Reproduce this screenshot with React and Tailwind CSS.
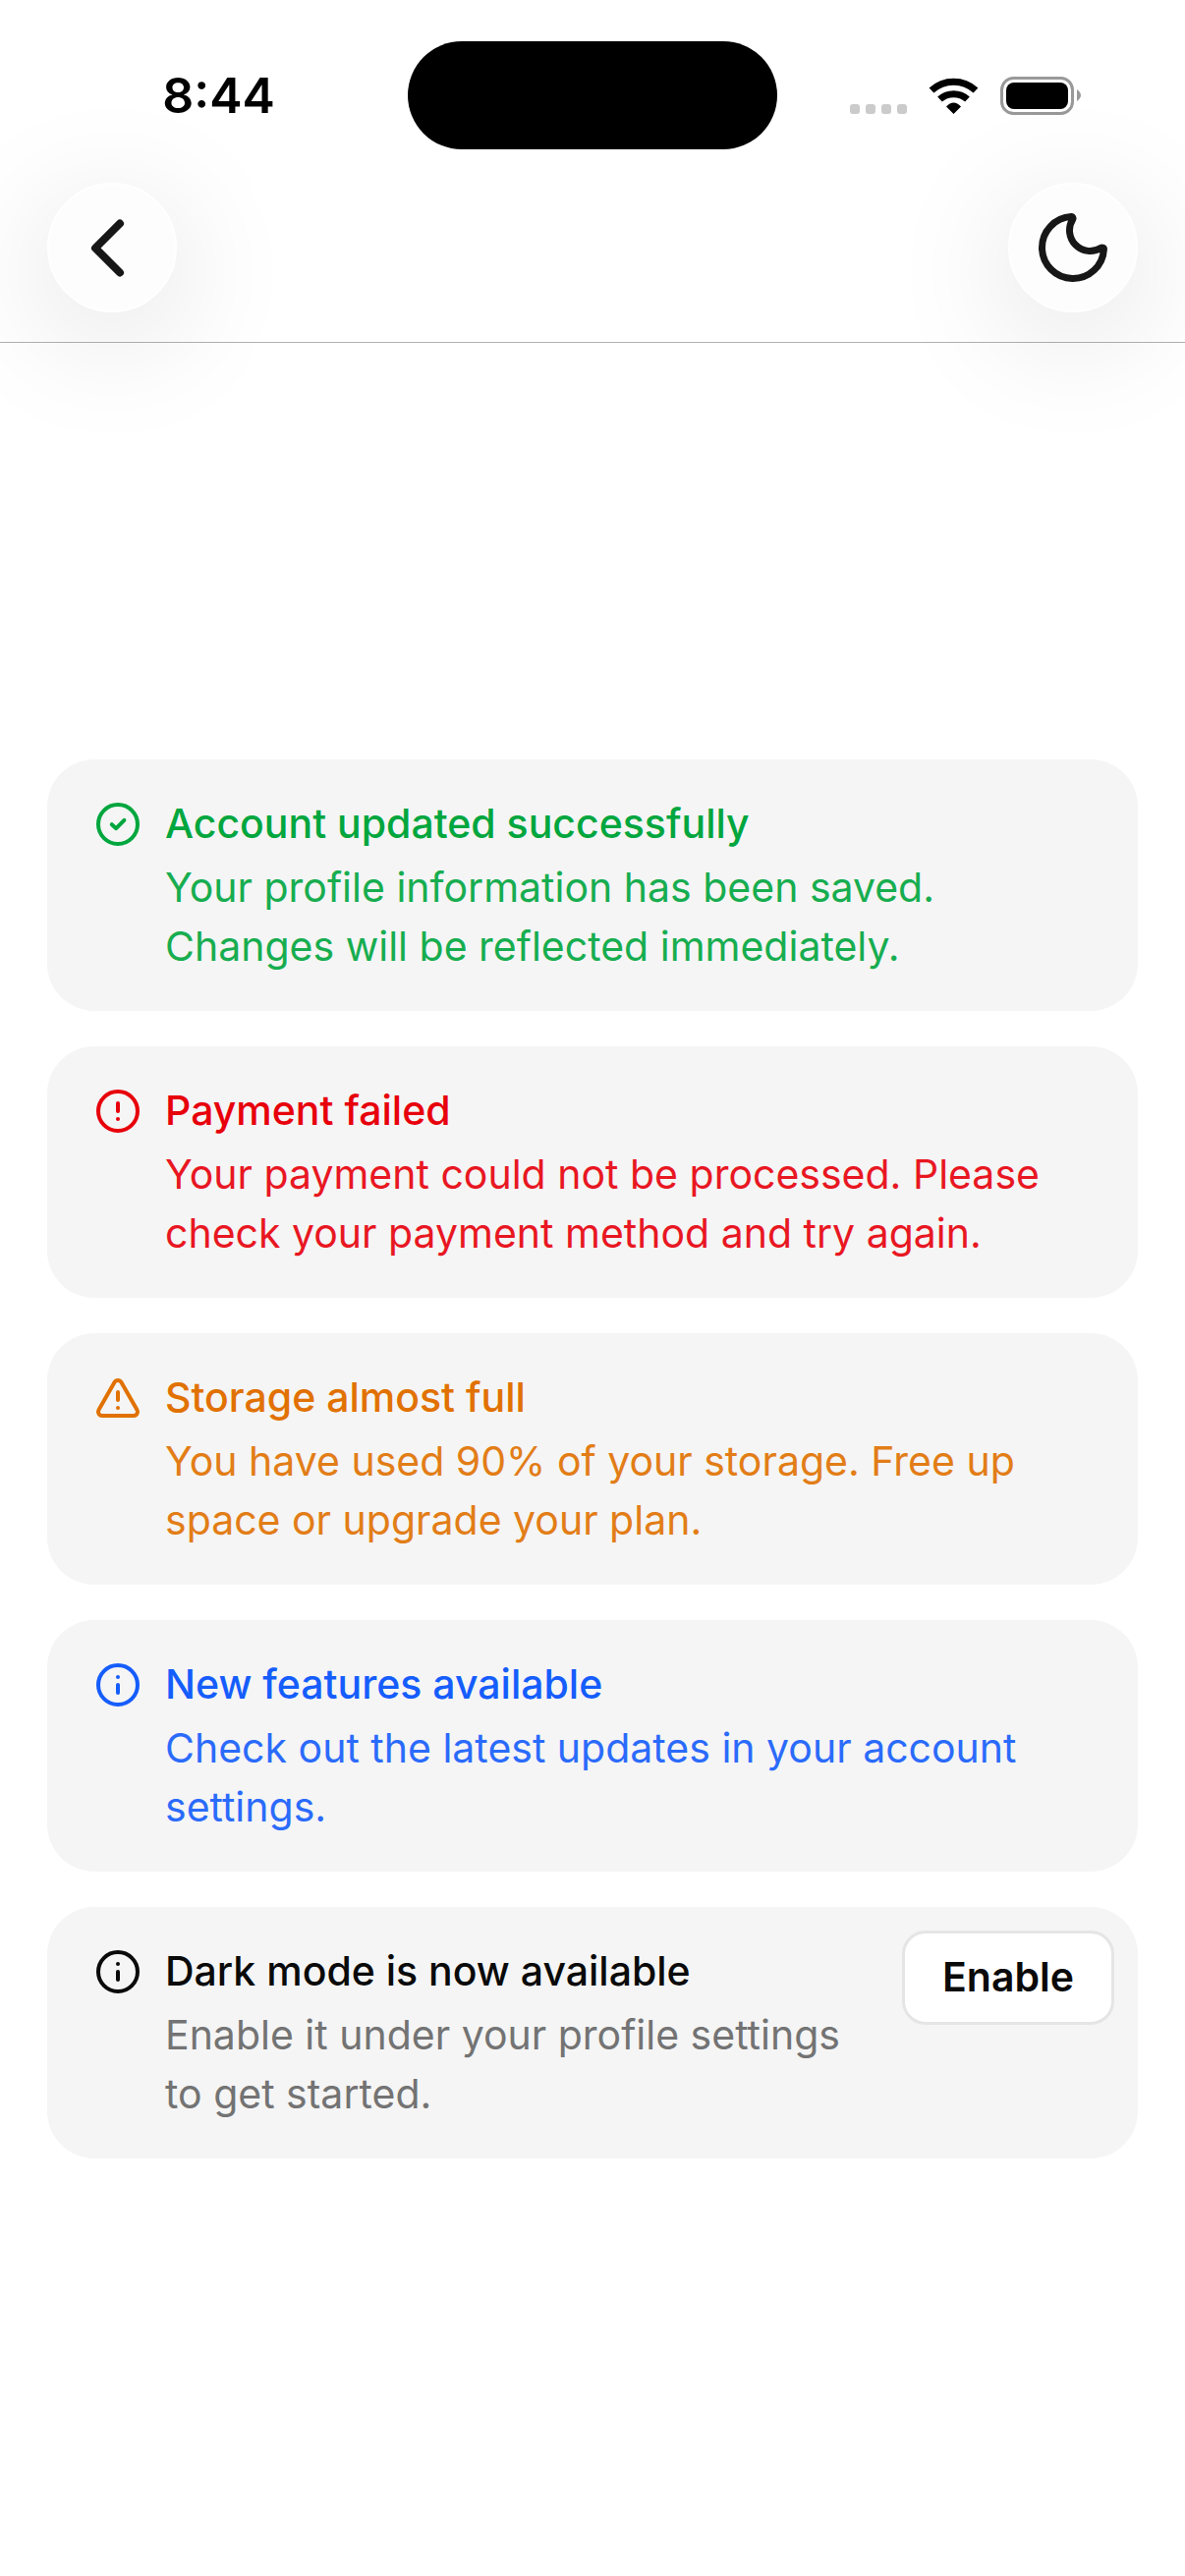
import { CircleAlert, Info, TriangleAlert } from 'lucide-react';

function CircleTick(props) {
  return (
    <svg
      viewBox="0 0 24 24"
      fill="none"
      stroke="currentColor"
      strokeWidth="2"
      strokeLinecap="round"
      strokeLinejoin="round"
      {...props}
    >
      <circle cx="12" cy="12" r="10" />
      <path d="m8.9 12.1 2.2 2 4.1-4.2" />
    </svg>
  );
}

const ALERTS = [
  {
    icon: CircleTick,
    title: 'Account updated successfully',
    text: 'Your profile information has been saved. Changes will be reflected immediately.',
    tone: 'text-[#00a63e]',
    textTone: 'opacity-90',
  },
  {
    icon: CircleAlert,
    title: 'Payment failed',
    text: 'Your payment could not be processed. Please check your payment method and try again.',
    tone: 'text-[#e7000b]',
    textTone: 'opacity-90',
  },
  {
    icon: TriangleAlert,
    title: 'Storage almost full',
    text: 'You have used 90% of your storage. Free up space or upgrade your plan.',
    tone: 'text-[#e17100]',
    textTone: 'opacity-90',
  },
  {
    icon: Info,
    title: 'New features available',
    text: 'Check out the latest updates in your account settings.',
    tone: 'text-[#155dfc]',
    textTone: 'opacity-90',
  },
  {
    icon: Info,
    title: 'Dark mode is now available',
    text: 'Enable it under your profile settings to get started.',
    tone: 'text-neutral-950',
    textTone: 'text-[#737373]',
    action: 'Enable',
  },
];

function StatusBar() {
  return (
    <div className="grid grid-cols-[1fr_376px_1fr] items-center pt-[42px]">
      <div className="pl-[30px] text-center text-[50px] leading-[60px] font-semibold text-black">8:44</div>
      <div className="h-[110px] rounded-full bg-black" />
      <div className="flex items-center justify-end pr-[106px]">
        <svg className="h-[40px] w-[236px]" viewBox="864 77 236 40" aria-hidden="true">
          {/* No signal */}
          <g fill="#cbcbcb">
            <rect x="865" y="106" width="10" height="10" rx="3" />
            <rect x="881" y="106" width="10" height="10" rx="3" />
            <rect x="897" y="106" width="10" height="10" rx="3" />
            <rect x="913" y="106" width="10" height="10" rx="3" />
          </g>
          {/* Wi-Fi */}
          <g fill="none" stroke="#000" strokeWidth="7">
            <path d="M948 92a33 33 0 0 1 45 0" />
            <path d="M956.500 101a21 21 0 0 1 28 0" />
          </g>
          <path d="M963 108.500q7.500-8 15 0l-7.500 7.500z" />
          {/* Battery */}
          <rect x="1019.500" y="79.500" width="72" height="36" rx="12" fill="none" stroke="#999" strokeWidth="3" />
          <rect x="1024" y="84" width="63" height="27" rx="8" />
          <path d="M1096 91q8 6 0 12z" fill="#999" />
        </svg>
      </div>
    </div>
  );
}

function RoundButton({ label, children }) {
  return (
    <button
      type="button"
      aria-label={label}
      className="flex size-[132px] items-center justify-center rounded-full border-2 border-white bg-[#fdfdfd] text-neutral-900 shadow-[0_24px_128px_rgba(0,0,0,0.13)]"
    >
      {children}
    </button>
  );
}

function Alert({ icon: Icon, title, text, tone, textTone, action }) {
  return (
    <section className={`flex items-start gap-6 rounded-[48px] bg-neutral-100 py-6 pr-6 pl-12 ${tone}`}>
      <Icon className="mt-[18px] size-12 shrink-0" aria-hidden="true" />
      <div className="flex min-w-0 flex-1 flex-col gap-1.5 py-3">
        <h2 className="text-[41px] leading-[58px] font-medium">{title}</h2>
        <p className={`text-[41px] leading-[60px] ${textTone}`}>{text}</p>
      </div>
      {action && (
        <button
          type="button"
          className="h-24 shrink-0 rounded-3xl border-3 border-neutral-200 bg-white px-[38px] text-[41px] font-semibold"
        >
          {action}
        </button>
      )}
    </section>
  );
}

export default function App() {
  return (
    <div className="min-h-screen overflow-x-hidden bg-white font-['Inter','Liberation_Sans',sans-serif]">
      <header className="border-b border-[#b2b2b2]">
        <StatusBar />
        <nav className="flex justify-between px-12 pt-[34px] pb-[30px]">
          <RoundButton label="Back">
            <svg
              className="size-[128px]"
              viewBox="2 2 128 128"
              fill="none"
              stroke="currentColor"
              strokeWidth="8"
              strokeLinecap="round"
              strokeLinejoin="round"
            >
              <path d="M74 41.500 49 66.500 74 91.500" />
            </svg>
          </RoundButton>
          <RoundButton label="Toggle dark mode">
            <svg
              className="size-[84px]"
              viewBox="0 0 24 24"
              fill="none"
              stroke="currentColor"
              strokeWidth="2"
              strokeLinecap="round"
              strokeLinejoin="round"
            >
              <path d="M20.985 12.486a9 9 0 1 1-9.473-9.472c.405-.022.617.46.402.803a6 6 0 0 0 8.268 8.268c.344-.215.825-.004.803.401" />
            </svg>
          </RoundButton>
        </nav>
      </header>

      <main className="flex flex-col gap-9 px-12 pt-[424px] pb-12">
        {ALERTS.map(alert => (
          <Alert key={alert.title} {...alert} />
        ))}
      </main>
    </div>
  );
}
